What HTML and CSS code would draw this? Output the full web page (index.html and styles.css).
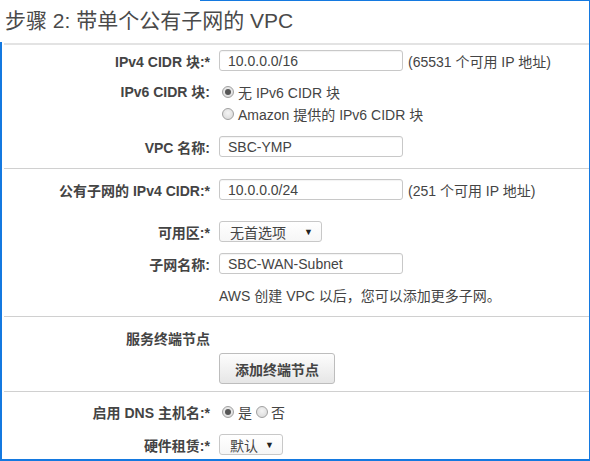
FILE: index.html
```html
<!DOCTYPE html>
<html lang="zh-CN">
<head>
<meta charset="utf-8">
<title>步骤 2: 带单个公有子网的 VPC</title>
<link rel="stylesheet" href="styles.css">
</head>
<body>
<div class="frame">
  <h1 class="title">步骤 2: 带单个公有子网的 VPC</h1>

  <section class="section s1">
    <div class="row r-ipv4">
      <label class="label">IPv4 CIDR 块:*</label>
      <div class="control">
        <input class="text" type="text" value="10.0.0.0/16">
        <span class="hint">(65531 个可用 IP 地址)</span>
      </div>
    </div>
    <div class="row r-ipv6">
      <label class="label">IPv6 CIDR 块:</label>
      <div class="control stack">
        <div class="radio-line"><span class="radio on"></span><span>无 IPv6 CIDR 块</span></div>
        <div class="radio-line"><span class="radio"></span><span>Amazon 提供的 IPv6 CIDR 块</span></div>
      </div>
    </div>
    <div class="row r-name">
      <label class="label">VPC 名称:</label>
      <div class="control">
        <input class="text" type="text" value="SBC-YMP">
      </div>
    </div>
  </section>

  <section class="section s2">
    <div class="row r-subnet">
      <label class="label">公有子网的 IPv4 CIDR:*</label>
      <div class="control">
        <input class="text" type="text" value="10.0.0.0/24">
        <span class="hint">(251 个可用 IP 地址)</span>
      </div>
    </div>
    <div class="row r-az">
      <label class="label">可用区:*</label>
      <div class="control">
        <div class="select wide"><span>无首选项</span><span class="caret">▼</span></div>
      </div>
    </div>
    <div class="row r-sname">
      <label class="label">子网名称:</label>
      <div class="control">
        <input class="text" type="text" value="SBC-WAN-Subnet">
      </div>
    </div>
    <div class="row r-note">
      <span class="label"></span>
      <div class="control note">AWS 创建 VPC 以后，您可以添加更多子网。</div>
    </div>
  </section>

  <section class="section s3">
    <div class="row r-ep">
      <label class="label">服务终端节点</label>
      <div class="control"></div>
    </div>
    <div class="row r-btn">
      <span class="label"></span>
      <div class="control"><button class="btn" type="button">添加终端节点</button></div>
    </div>
  </section>

  <section class="section s4">
    <div class="row r-dns">
      <label class="label">启用 DNS 主机名:*</label>
      <div class="control">
        <span class="radio on"></span><span>是</span><span class="radio gap"></span><span>否</span>
      </div>
    </div>
    <div class="row r-ten">
      <label class="label">硬件租赁:*</label>
      <div class="control">
        <div class="select narrow"><span>默认</span><span class="caret">▼</span></div>
      </div>
    </div>
  </section>
</div>
</body>
</html>
```

FILE: styles.css
```css
html, body {
  margin: 0;
  padding: 0;
  background: #fff;
}
body {
  font-family: "Liberation Sans", Arial, "Noto Sans CJK SC", sans-serif;
  font-size: 14px;
  color: #444;
}
.frame {
  position: relative;
  width: 587px;
  height: 458px;
  border-right: 1px solid #1479e0;
  border-bottom: 2px solid #1479e0;
  padding: 1px 0 0 2px;
  overflow: hidden;
  box-sizing: content-box;
}
/* partial highlight edges of the captured selection */
.frame::before {
  content: "";
  position: absolute;
  top: 0;
  left: 200px;
  right: 0;
  height: 1px;
  background: #1479e0;
}
.frame::after {
  content: "";
  position: absolute;
  top: 42px;
  left: 0;
  bottom: 0;
  width: 2px;
  background: #1479e0;
}
.title {
  margin: 0 0 0 2px;
  padding: 8px 0 0 1px;
  height: 34px;
  font-size: 21px;
  font-weight: normal;
  line-height: 24px;
  color: #4a4a4a;
  border-bottom: 2px solid #e3e3e3;
  box-sizing: content-box;
  white-space: nowrap;
}
.section {
  margin-left: 2px;
  border-bottom: 1px solid #d0d0d0;
}
.s4 { border-bottom: none; }
.row {
  display: grid;
  grid-template-columns: 206px 1fr;
  column-gap: 9px;
  align-items: center;
}
.label {
  text-align: right;
  font-weight: bold;
  white-space: nowrap;
}
.control {
  display: flex;
  align-items: center;
  white-space: nowrap;
}
.control.stack {
  flex-direction: column;
  align-items: flex-start;
}
.text {
  width: 184px;
  height: 21px;
  box-sizing: border-box;
  border: 1px solid #c8c8c8;
  border-radius: 3px;
  padding: 0 8px;
  font: inherit;
  font-size: 14px;
  color: #444;
  box-shadow: inset 0 1px 1px rgba(0,0,0,0.05);
  outline: none;
}
.hint {
  margin-left: 5px;
}
.radio-line {
  display: flex;
  align-items: center;
  height: 22px;
}
.radio {
  width: 12px;
  height: 12px;
  box-sizing: border-box;
  border-radius: 50%;
  border: 1px solid #a0a0a0;
  background: radial-gradient(circle at 50% 40%, #f4f4f4 0%, #d6d6d6 100%);
  margin: 0 4px 0 3px;
  position: relative;
  flex: none;
}
.radio.on::after {
  content: "";
  position: absolute;
  left: 2px;
  top: 2px;
  width: 6px;
  height: 6px;
  border-radius: 50%;
  background: #555;
}
.radio.gap { margin-left: 4px; margin-right: 3px; }
.select {
  height: 21px;
  box-sizing: border-box;
  border: 1px solid #c8c8c8;
  border-radius: 3px;
  background: linear-gradient(#fff, #f6f6f6);
  display: flex;
  align-items: center;
  justify-content: space-between;
  padding: 0 8px 0 10px;
}
.select.wide { width: 103px; }
.select.narrow { width: 64px; }
.caret {
  font-size: 9px;
  color: #222;
}
.btn {
  width: 116px;
  height: 31px;
  border: 1px solid #bdbdbd;
  border-radius: 3px;
  background: linear-gradient(#fdfdfd, #e6e6e6);
  font: inherit;
  font-weight: bold;
  font-size: 14px;
  color: #444;
  padding: 0;
}
.note { height: 20px; }

/* vertical rhythm */
.s1 { padding: 5px 0 11px; }
.r-ipv4 { height: 21px; }
.r-ipv6 { margin-top: 10px; }
.r-ipv6 .label { align-self: start; line-height: 22px; }
.r-name { margin-top: 11px; height: 21px; }

.s2 { padding: 10px 0 11px; }
.r-subnet { height: 21px; }
.r-az { margin-top: 21px; height: 21px; }
.r-sname { margin-top: 11px; height: 21px; }
.r-note { margin-top: 11px; height: 20px; }

.s3 { padding: 11px 0 7px; }
.r-ep { height: 20px; }
.r-btn { margin-top: 5px; }

.s4 { padding: 10px 0 0; }
.r-dns { height: 20px; }
.r-ten { margin-top: 12px; height: 21px; }
```
